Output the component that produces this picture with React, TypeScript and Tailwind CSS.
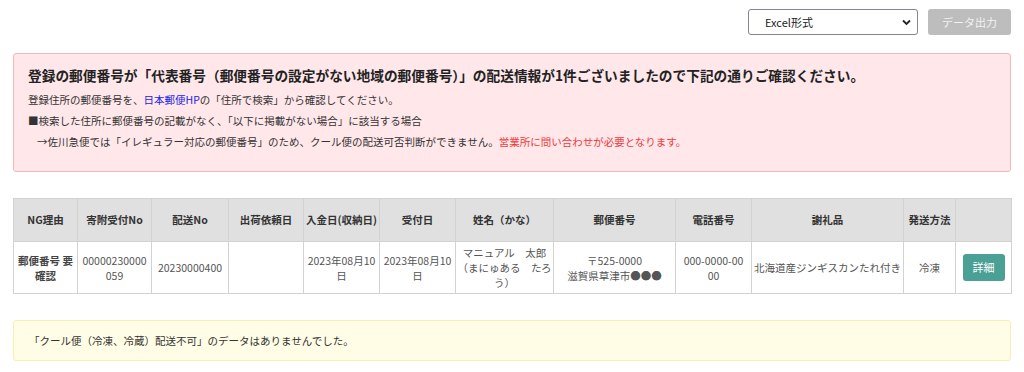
import React from "react";

const font = { fontFamily: '"Noto Sans CJK JP", "Noto Sans", sans-serif' };

const columns = [
  { label: "NG理由", w: 64 },
  { label: "寄附受付No", w: 74 },
  { label: "配送No", w: 77 },
  { label: "出荷依頼日", w: 75 },
  { label: "入金日(収納日)", w: 76 },
  { label: "受付日", w: 76 },
  { label: "姓名（かな）", w: 98 },
  { label: "郵便番号", w: 122 },
  { label: "電話番号", w: 76 },
  { label: "謝礼品", w: 152 },
  { label: "発送方法", w: 52 },
  { label: "", w: 56 },
];

const cell = "border border-[#d2d2d2] px-[2px]";

export default function App() {
  return (
    <div className="min-h-[372px] bg-white px-[13px] pt-[9px] text-[#333]" style={font}>
      {/* Export controls */}
      <div className="flex justify-end gap-[10px]">
        <div className="relative h-[26px] w-[170px] rounded-[3px] border border-[#8a8296] bg-white">
          <span className="absolute left-[16px] top-[4px] text-[11px] leading-[16px] text-[#222]">Excel形式</span>
          <svg className="absolute right-[6px] top-[9px]" width="9" height="7" viewBox="0 0 9 7">
            <path d="M1 1.5 L4.5 5 L8 1.5" fill="none" stroke="#222" strokeWidth="1.8" />
          </svg>
        </div>
        <button className="h-[26px] w-[83px] rounded-[3px] bg-[#bdbdbd] text-[11px] text-[#f2f2f2]">
          データ出力
        </button>
      </div>

      {/* Warning box */}
      <div className="mt-[18px] rounded-[3px] border border-[#f4b6bd] bg-[#ffe7ea] px-[14px] pt-[11px] pb-[19px]">
        <p className="text-[13.7px] font-bold leading-[20px] text-[#222]">
          登録の郵便番号が「代表番号（郵便番号の設定がない地域の郵便番号）」の配送情報が1件ございましたので下記の通りご確認ください。
        </p>
        <div className="mt-[4px] text-[10.5px] leading-[21px] text-[#333]">
          <p>
            登録住所の郵便番号を、<span className="text-[#2121e8]">日本郵便HP</span>の「住所で検索」から確認してください。
          </p>
          <p>■検索した住所に郵便番号の記載がなく、「以下に掲載がない場合」に該当する場合</p>
          <p className="pl-[9px]">
            →佐川急便では「イレギュラー対応の郵便番号」のため、クール便の配送可否判断ができません。
            <span className="text-[#f03a3a]">営業所に問い合わせが必要となります。</span>
          </p>
        </div>
      </div>

      {/* Result table */}
      <table className="mt-[26px] w-full table-fixed border-collapse text-[10.5px]">
        <colgroup>
          {columns.map((c, i) => (
            <col key={i} style={{ width: c.w }} />
          ))}
        </colgroup>
        <thead>
          <tr className="h-[43px] bg-[#e0e0e0]">
            {columns.map((c, i) => (
              <th key={i} className="border border-[#d2d2d2] px-0 text-center font-bold whitespace-nowrap text-[#333]">
                {c.label}
              </th>
            ))}
          </tr>
        </thead>
        <tbody>
          <tr className="h-[52px] text-center leading-[15px] text-[#555]">
            <td className={`${cell} font-bold text-[#444]`}>郵便番号 要確認</td>
            <td className={`${cell} break-all`}>00000230000059</td>
            <td className={cell}>20230000400</td>
            <td className={cell}></td>
            <td className={`${cell} break-all`}>2023年08月10日</td>
            <td className={`${cell} break-all`}>2023年08月10日</td>
            <td className="border border-[#d2d2d2] px-[1px]">マニュアル　太郎（まにゅある　たろう）</td>
            <td className={cell}>
              〒525-0000
              <br />
              滋賀県草津市●●●
            </td>
            <td className="break-all border border-[#d2d2d2] px-[5px]">000-0000-0000</td>
            <td className={`${cell} whitespace-nowrap`}>北海道産ジンギスカンたれ付き</td>
            <td className={cell}>冷凍</td>
            <td className="border border-[#d2d2d2] px-[6px]">
              <button className="h-[27px] w-[42px] rounded-[3px] bg-[#4aa095] text-[11px] text-white">詳細</button>
            </td>
          </tr>
        </tbody>
      </table>

      {/* Info box */}
      <div className="mt-[26px] flex h-[41px] items-center rounded-[3px] border border-[#fbeeb0] bg-[#fffde6] pl-[15px] text-[10.5px] text-[#333]">
        「クール便（冷凍、冷蔵）配送不可」のデータはありませんでした。
      </div>
    </div>
  );
}
